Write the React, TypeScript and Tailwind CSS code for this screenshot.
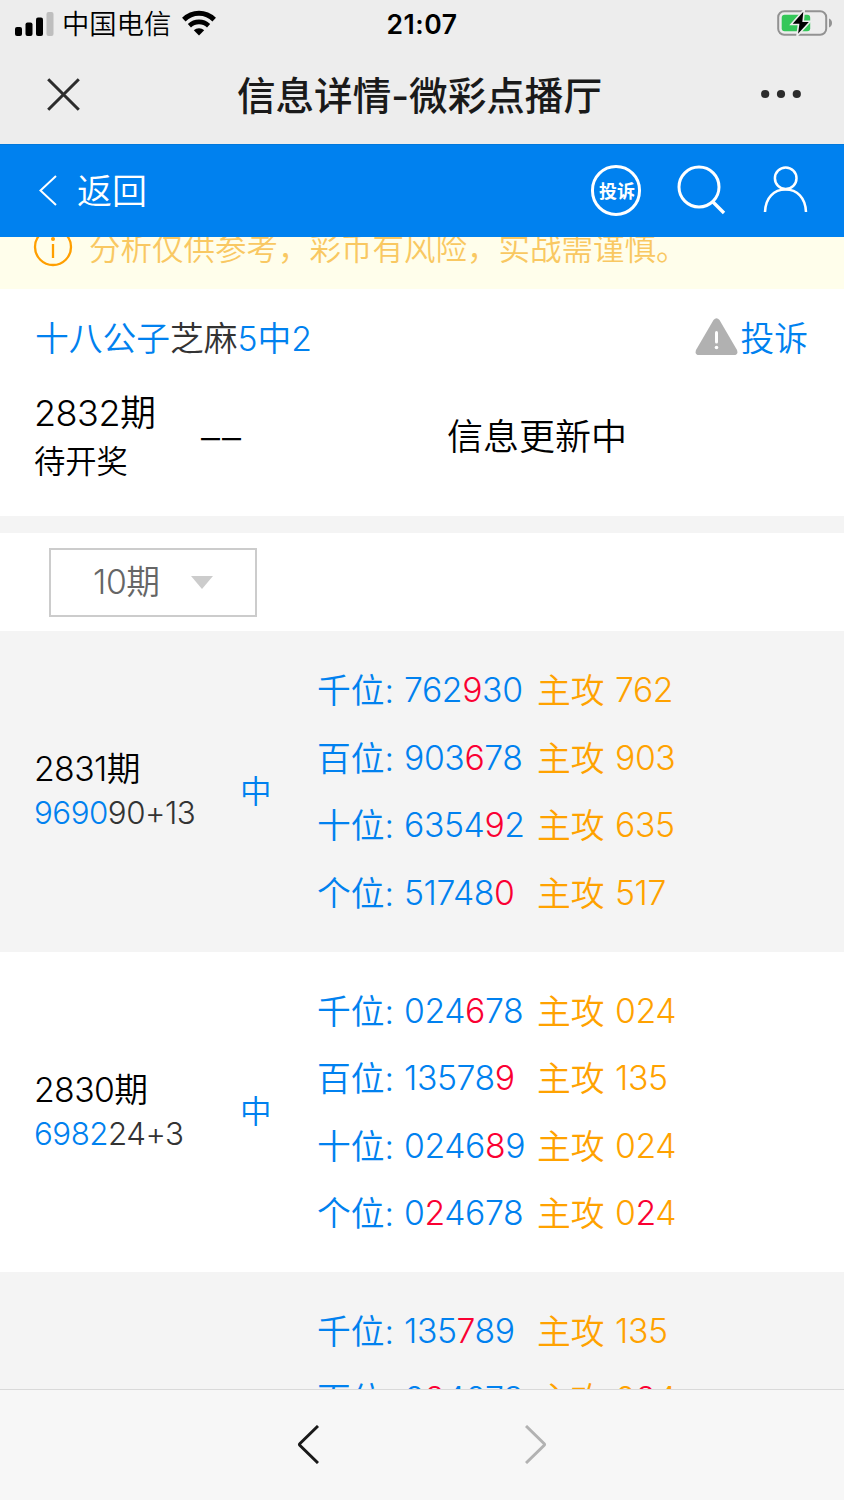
import React from "react";

type Pick = { label: string; digits: string; hit: number; main: string; mainHit?: number };
type Issue = { issue: string; matched?: string; rest?: string; picks: Pick[] };

const issues: Issue[] = [
  {
    issue: "2831",
    matched: "9690",
    rest: "90+13",
    picks: [
      { label: "千位", digits: "762930", hit: 3, main: "762" },
      { label: "百位", digits: "903678", hit: 3, main: "903" },
      { label: "十位", digits: "635492", hit: 4, main: "635" },
      { label: "个位", digits: "517480", hit: 5, main: "517" },
    ],
  },
  {
    issue: "2830",
    matched: "6982",
    rest: "24+3",
    picks: [
      { label: "千位", digits: "024678", hit: 3, main: "024" },
      { label: "百位", digits: "135789", hit: 5, main: "135" },
      { label: "十位", digits: "024689", hit: 4, main: "024" },
      { label: "个位", digits: "024678", hit: 1, main: "024", mainHit: 1 },
    ],
  },
  {
    issue: "",
    picks: [
      { label: "千位", digits: "135789", hit: 3, main: "135" },
      { label: "百位", digits: "024678", hit: 1, main: "024", mainHit: 1 },
    ],
  },
];

function Digits({ value, hit }: { value: string; hit?: number }) {
  if (hit === undefined) return <>{value}</>;
  return (
    <>
      {value.slice(0, hit)}
      <span className="text-[#fa0032]">{value[hit]}</span>
      {value.slice(hit + 1)}
    </>
  );
}

function StatusBar() {
  return (
    <div className="grid h-12 grid-cols-3 items-center text-black">
      <div className="flex items-center pl-[15px]">
        <svg className="mt-[-2px]" width="39" height="24" viewBox="0 0 39 24">
          <rect x="0" y="15" width="7" height="9" rx="2" />
          <rect x="10.5" y="10.5" width="7" height="13.5" rx="2" />
          <rect x="21" y="5.5" width="7" height="18.5" rx="2" />
          <rect x="31.5" y="0" width="7" height="24" rx="2" fill="#bebebe" />
        </svg>
        <span className="mt-px ml-2 whitespace-nowrap text-[27.3px] leading-[48px]">中国电信</span>
        <svg className="mt-[-3px] ml-[11px]" width="34" height="26" viewBox="0 0 34 26">
          <path d="M1.800 9.600C10.500 1.200 23.500 1.200 32.200 9.600" fill="none" stroke="#000" strokeWidth="5" />
          <path d="M7.400 15.700C12.900 10.600 21.100 10.600 26.600 15.700" fill="none" stroke="#000" strokeWidth="4.600" />
          <path d="M17 25.500L11.800 20.300C14.600 17.600 19.400 17.600 22.200 20.300Z" />
        </svg>
      </div>
      <div className="-mt-[2px] text-center text-[26.5px] leading-[48px] font-semibold tracking-[0.5px]">21:07</div>
      <div className="flex justify-end pr-[11px]">
        <svg className="mt-[-3px]" width="56" height="28" viewBox="0 0 56 28">
          <rect x="1.200" y="2.200" width="48" height="23.500" rx="6" fill="none" stroke="#929292" strokeWidth="2" />
          <path d="M52 9.500C56 11 56 17 52 18.500Z" fill="#929292" />
          <rect x="4.700" y="5.700" width="28.500" height="16.600" rx="3" fill="#34c759" />
          <path d="M27.300 0.500L14 15.500h7.500L20 27 33.500 12.300h-7.300Z" fill="#000" stroke="#ededed" strokeWidth="1.600" />
        </svg>
      </div>
    </div>
  );
}

export default function App() {
  return (
    <div className="flex h-[1500px] w-[844px] flex-col overflow-hidden bg-white font-['Inter','Noto_Sans_CJK_SC',sans-serif] font-[350] text-black">
      <header className="h-36 shrink-0 bg-[#ededed]">
        <StatusBar />
        <div className="flex h-24 items-center justify-between pr-[43px] pb-1 pl-[47px]">
          <svg width="33" height="33" viewBox="0 0 33 33" fill="none" stroke="#2c2c2c" strokeWidth="3">
            <path d="M1.2 1.2L31.8 31.8M31.8 1.2L1.2 31.8" />
          </svg>
          <h1 className="mt-[3px] mr-[2px] text-[38.6px] leading-[60px] font-medium whitespace-nowrap text-[#1a1a1a]">信息详情-微彩点播厅</h1>
          <svg width="40" height="10" viewBox="0 0 40 10" fill="#2c2c2c">
            <circle cx="4.2" cy="5" r="4.1" />
            <circle cx="20" cy="5" r="4.1" />
            <circle cx="35.8" cy="5" r="4.1" />
          </svg>
        </div>
      </header>

      <nav className="flex h-[93px] shrink-0 items-center border-t border-[#0078dc] bg-[#0081ef] pb-[2px] pl-[39px] text-white">
        <svg width="18" height="31" viewBox="0 0 18 31" fill="none" stroke="#fff" strokeWidth="2">
          <path d="M17 1L1.5 15.5L17 30" />
        </svg>
        <span className="ml-5 pt-px text-[35px] leading-[60px]">返回</span>
        <div className="ml-auto flex items-center pr-9">
          <div className="flex h-[51px] w-[50px] items-center justify-center rounded-full border-[3px] border-white pt-[3px] pl-[2px] text-[18px] leading-none font-bold whitespace-nowrap">
            投诉
          </div>
          <svg className="-mt-[2px] ml-9" width="50" height="52" viewBox="0 0 50 52" fill="none" stroke="#fff" strokeWidth="3">
            <circle cx="22" cy="24" r="20" />
            <path d="M35.500 38.500L47 50" strokeWidth="3.400" />
          </svg>
          <svg className="-mt-[3px] ml-[36px]" width="45" height="48" viewBox="0 0 45 48" fill="none" stroke="#fff" strokeWidth="2.500">
            <circle cx="22.700" cy="13.300" r="10.800" />
            <path d="M2 47C2.500 32.500 11 24.500 22.500 24.500S42.500 32.500 43 47" />
          </svg>
        </div>
      </nav>

      <div className="h-[52px] shrink-0 overflow-hidden bg-[#fffeeb]">
        <div className="-mt-[31px] flex h-[83px] items-center pl-[33px]">
          <svg className="mb-[2px]" width="40" height="40" viewBox="0 0 40 40" fill="none" stroke="#ff9f00" strokeWidth="2.300">
            <circle cx="20" cy="20" r="18" />
            <path d="M20 17V31" />
            <circle cx="20" cy="12" r="2" fill="#ff9f00" stroke="none" />
          </svg>
          <span className="mt-[2px] ml-4 text-[31.500px] leading-[48px] whitespace-nowrap text-[#f9c862]">
            分析仅供参考，彩币有风险，实战需谨慎。
          </span>
        </div>
      </div>

      <section className="h-[227px] shrink-0">
        <div className="flex h-[98px] items-center justify-between pr-9 pl-[35px] text-[33.750px] text-[#0081ef]">
          <div className="pt-[2px]">
            十八公子<span className="text-[#333]">芝麻</span>5中2
          </div>
          <div className="flex items-center">
            <svg className="mr-[2px] mb-1" width="43" height="37" viewBox="0 0 43 37">
              <path d="M18.500 2Q21.500-1.500 24.500 2L42 32Q43.500 37 39 37H4Q-0.500 37 1 32Z" fill="#b1b1b1" />
              <path d="M21.500 14.500V24" stroke="#fff" strokeWidth="3" strokeLinecap="round" />
              <circle cx="21.500" cy="29.500" r="1.800" fill="#fff" />
            </svg>
            <span className="pt-[2px]">投诉</span>
          </div>
        </div>
        <div className="flex h-[100px] items-center pl-[34px]">
          <div className="w-[167px]">
            <div className="text-[36px] leading-[50px] tracking-[-0.500px]">2832期</div>
            <div className="pt-px text-[31.300px] leading-[47px]">待开奖</div>
          </div>
          <div className="w-[246px] text-[38px] leading-[48px] tracking-[2px]">––</div>
          <div className="text-[36px]">信息更新中</div>
        </div>
      </section>

      <div className="h-[17px] shrink-0 bg-[#f4f4f4]" />

      <div className="h-[98px] shrink-0 pt-[15px] pl-[49px]">
        <button className="flex h-[69px] w-[208px] items-center border-2 border-[#ccc] pl-[42px] text-[33.750px] tracking-[-0.400px] text-[#666]">
          10期
          <svg className="ml-[31px]" width="22" height="13" viewBox="0 0 22 13" fill="#ccc">
            <path d="M0 0H22L11 13Z" />
          </svg>
        </button>
      </div>

      <main className="min-h-0 flex-1 overflow-hidden">
        {issues.map((row, i) => (
          <article key={i} className="flex h-[320.500px] items-center pl-[34px] odd:bg-[#f4f4f4]">
            <div className="w-[206px]">
              {row.issue && (
                <>
                  <div className="text-[33.750px] leading-[44px] tracking-[-0.600px]">{row.issue}期</div>
                  <div className="text-[31.300px] leading-[44px] tracking-[-0.500px] text-[#333]">
                    <span className="text-[#0081ef]">{row.matched}</span>
                    {row.rest}
                  </div>
                </>
              )}
            </div>
            <div className="w-[77px] text-[31.500px] text-[#0081ef]">{row.issue && "中"}</div>
            <div className="h-[270px] text-[33.750px] leading-[67.500px]">
              {row.picks.map((p) => (
                <div key={p.label} className="flex h-[67.500px] whitespace-nowrap text-[#0081ef]">
                  <span className="w-[87px] pt-px">{p.label}:</span>
                  <span className="w-[133px] tracking-[-0.400px]">
                    <Digits value={p.digits} hit={p.hit} />
                  </span>
                  <span className="w-[78px] pt-px text-[#ffa200]">主攻</span>
                  <span className="tracking-[-0.400px] text-[#ffa200]">
                    <Digits value={p.main} hit={p.mainHit} />
                  </span>
                </div>
              ))}
            </div>
          </article>
        ))}
      </main>

      <footer className="flex h-[111px] shrink-0 items-center border-t border-[#d9d9d9] bg-[#f7f7f7] pb-px pl-[297px]">
        <svg width="22" height="39" viewBox="0 0 22 39" fill="none" stroke="#191919" strokeWidth="3">
          <path d="M21 1L3 18.500Q2 19.500 3 20.500L21 38" />
        </svg>
        <svg className="ml-[206px]" width="22" height="39" viewBox="0 0 22 39" fill="none" stroke="#b2b2b2" strokeWidth="3">
          <path d="M1 1L19 18.500Q20 19.500 19 20.500L1 38" />
        </svg>
      </footer>
    </div>
  );
}
